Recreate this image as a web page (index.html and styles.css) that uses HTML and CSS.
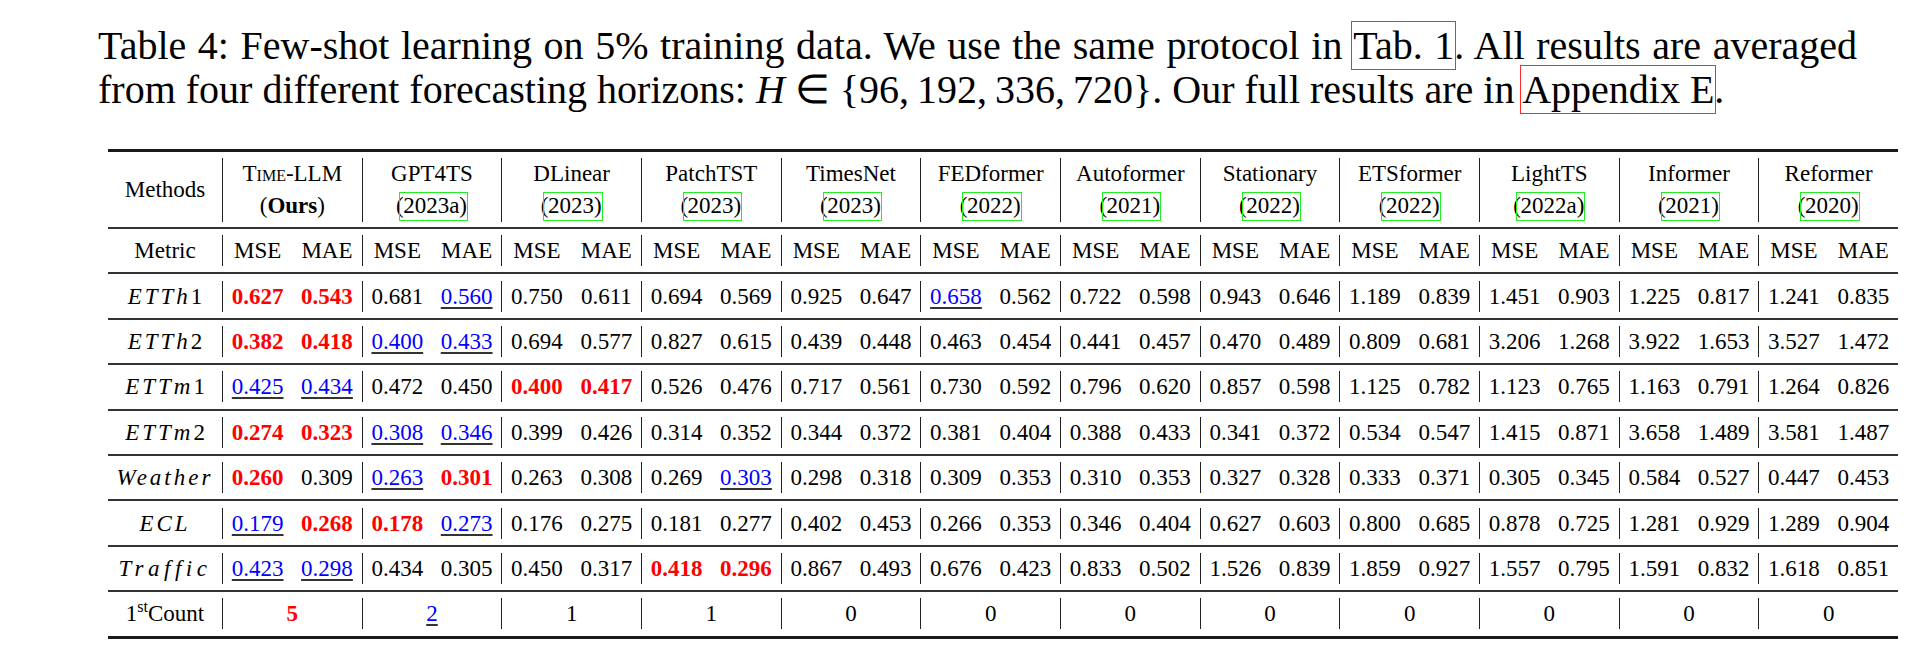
FILE: index.html
```html
<!DOCTYPE html>
<html>
<head>
<meta charset="utf-8">
<link rel="stylesheet" href="styles.css">
</head>
<body>
<div class="page">
  <p class="caption">Table 4: Few-shot learning on 5% training data. We use the same protocol in <span class="ref">Tab. 1</span>. All results are averaged from four different forecasting horizons: <i>H</i> <span class="math">&isin;</span> {96,&thinsp;192,&thinsp;336,&thinsp;720}. Our full results are in <span class="ref">Appendix E</span>.</p>

  <div class="table">
    <div class="row head">
      <div class="c first">Methods</div>
      <div class="g"><span>T<span class="sc">ime</span>-LLM</span><span>(<b>Ours</b>)</span></div>
      <div class="g"><span>GPT4TS</span><span>(<span class="cite">2023a)</span></span></div>
      <div class="g"><span>DLinear</span><span>(<span class="cite">2023)</span></span></div>
      <div class="g"><span>PatchTST</span><span>(<span class="cite">2023)</span></span></div>
      <div class="g"><span>TimesNet</span><span>(<span class="cite">2023)</span></span></div>
      <div class="g"><span>FEDformer</span><span>(<span class="cite">2022)</span></span></div>
      <div class="g"><span>Autoformer</span><span>(<span class="cite">2021)</span></span></div>
      <div class="g"><span>Stationary</span><span>(<span class="cite">2022)</span></span></div>
      <div class="g"><span>ETSformer</span><span>(<span class="cite">2022)</span></span></div>
      <div class="g"><span>LightTS</span><span>(<span class="cite">2022a)</span></span></div>
      <div class="g"><span>Informer</span><span>(<span class="cite">2021)</span></span></div>
      <div class="g"><span>Reformer</span><span>(<span class="cite">2020)</span></span></div>
    </div>

    <div class="row">
      <div class="c first">Metric</div>
      <div class="g pair"><span>MSE</span><span>MAE</span></div>
      <div class="g pair"><span>MSE</span><span>MAE</span></div>
      <div class="g pair"><span>MSE</span><span>MAE</span></div>
      <div class="g pair"><span>MSE</span><span>MAE</span></div>
      <div class="g pair"><span>MSE</span><span>MAE</span></div>
      <div class="g pair"><span>MSE</span><span>MAE</span></div>
      <div class="g pair"><span>MSE</span><span>MAE</span></div>
      <div class="g pair"><span>MSE</span><span>MAE</span></div>
      <div class="g pair"><span>MSE</span><span>MAE</span></div>
      <div class="g pair"><span>MSE</span><span>MAE</span></div>
      <div class="g pair"><span>MSE</span><span>MAE</span></div>
      <div class="g pair"><span>MSE</span><span>MAE</span></div>
    </div>

    <div class="row">
      <div class="c first ds"><span>ETTh<span class="up">1</span></span></div>
      <div class="g pair"><span class="best">0.627</span><span class="best">0.543</span></div>
      <div class="g pair"><span>0.681</span><span class="second">0.560</span></div>
      <div class="g pair"><span>0.750</span><span>0.611</span></div>
      <div class="g pair"><span>0.694</span><span>0.569</span></div>
      <div class="g pair"><span>0.925</span><span>0.647</span></div>
      <div class="g pair"><span class="second">0.658</span><span>0.562</span></div>
      <div class="g pair"><span>0.722</span><span>0.598</span></div>
      <div class="g pair"><span>0.943</span><span>0.646</span></div>
      <div class="g pair"><span>1.189</span><span>0.839</span></div>
      <div class="g pair"><span>1.451</span><span>0.903</span></div>
      <div class="g pair"><span>1.225</span><span>0.817</span></div>
      <div class="g pair"><span>1.241</span><span>0.835</span></div>
    </div>

    <div class="row">
      <div class="c first ds"><span>ETTh<span class="up">2</span></span></div>
      <div class="g pair"><span class="best">0.382</span><span class="best">0.418</span></div>
      <div class="g pair"><span class="second">0.400</span><span class="second">0.433</span></div>
      <div class="g pair"><span>0.694</span><span>0.577</span></div>
      <div class="g pair"><span>0.827</span><span>0.615</span></div>
      <div class="g pair"><span>0.439</span><span>0.448</span></div>
      <div class="g pair"><span>0.463</span><span>0.454</span></div>
      <div class="g pair"><span>0.441</span><span>0.457</span></div>
      <div class="g pair"><span>0.470</span><span>0.489</span></div>
      <div class="g pair"><span>0.809</span><span>0.681</span></div>
      <div class="g pair"><span>3.206</span><span>1.268</span></div>
      <div class="g pair"><span>3.922</span><span>1.653</span></div>
      <div class="g pair"><span>3.527</span><span>1.472</span></div>
    </div>

    <div class="row">
      <div class="c first ds"><span>ETTm<span class="up">1</span></span></div>
      <div class="g pair"><span class="second">0.425</span><span class="second">0.434</span></div>
      <div class="g pair"><span>0.472</span><span>0.450</span></div>
      <div class="g pair"><span class="best">0.400</span><span class="best">0.417</span></div>
      <div class="g pair"><span>0.526</span><span>0.476</span></div>
      <div class="g pair"><span>0.717</span><span>0.561</span></div>
      <div class="g pair"><span>0.730</span><span>0.592</span></div>
      <div class="g pair"><span>0.796</span><span>0.620</span></div>
      <div class="g pair"><span>0.857</span><span>0.598</span></div>
      <div class="g pair"><span>1.125</span><span>0.782</span></div>
      <div class="g pair"><span>1.123</span><span>0.765</span></div>
      <div class="g pair"><span>1.163</span><span>0.791</span></div>
      <div class="g pair"><span>1.264</span><span>0.826</span></div>
    </div>

    <div class="row">
      <div class="c first ds"><span>ETTm<span class="up">2</span></span></div>
      <div class="g pair"><span class="best">0.274</span><span class="best">0.323</span></div>
      <div class="g pair"><span class="second">0.308</span><span class="second">0.346</span></div>
      <div class="g pair"><span>0.399</span><span>0.426</span></div>
      <div class="g pair"><span>0.314</span><span>0.352</span></div>
      <div class="g pair"><span>0.344</span><span>0.372</span></div>
      <div class="g pair"><span>0.381</span><span>0.404</span></div>
      <div class="g pair"><span>0.388</span><span>0.433</span></div>
      <div class="g pair"><span>0.341</span><span>0.372</span></div>
      <div class="g pair"><span>0.534</span><span>0.547</span></div>
      <div class="g pair"><span>1.415</span><span>0.871</span></div>
      <div class="g pair"><span>3.658</span><span>1.489</span></div>
      <div class="g pair"><span>3.581</span><span>1.487</span></div>
    </div>

    <div class="row">
      <div class="c first ds">Weather</div>
      <div class="g pair"><span class="best">0.260</span><span>0.309</span></div>
      <div class="g pair"><span class="second">0.263</span><span class="best">0.301</span></div>
      <div class="g pair"><span>0.263</span><span>0.308</span></div>
      <div class="g pair"><span>0.269</span><span class="second">0.303</span></div>
      <div class="g pair"><span>0.298</span><span>0.318</span></div>
      <div class="g pair"><span>0.309</span><span>0.353</span></div>
      <div class="g pair"><span>0.310</span><span>0.353</span></div>
      <div class="g pair"><span>0.327</span><span>0.328</span></div>
      <div class="g pair"><span>0.333</span><span>0.371</span></div>
      <div class="g pair"><span>0.305</span><span>0.345</span></div>
      <div class="g pair"><span>0.584</span><span>0.527</span></div>
      <div class="g pair"><span>0.447</span><span>0.453</span></div>
    </div>

    <div class="row">
      <div class="c first ds">ECL</div>
      <div class="g pair"><span class="second">0.179</span><span class="best">0.268</span></div>
      <div class="g pair"><span class="best">0.178</span><span class="second">0.273</span></div>
      <div class="g pair"><span>0.176</span><span>0.275</span></div>
      <div class="g pair"><span>0.181</span><span>0.277</span></div>
      <div class="g pair"><span>0.402</span><span>0.453</span></div>
      <div class="g pair"><span>0.266</span><span>0.353</span></div>
      <div class="g pair"><span>0.346</span><span>0.404</span></div>
      <div class="g pair"><span>0.627</span><span>0.603</span></div>
      <div class="g pair"><span>0.800</span><span>0.685</span></div>
      <div class="g pair"><span>0.878</span><span>0.725</span></div>
      <div class="g pair"><span>1.281</span><span>0.929</span></div>
      <div class="g pair"><span>1.289</span><span>0.904</span></div>
    </div>

    <div class="row">
      <div class="c first ds wide">Traffic</div>
      <div class="g pair"><span class="second">0.423</span><span class="second">0.298</span></div>
      <div class="g pair"><span>0.434</span><span>0.305</span></div>
      <div class="g pair"><span>0.450</span><span>0.317</span></div>
      <div class="g pair"><span class="best">0.418</span><span class="best">0.296</span></div>
      <div class="g pair"><span>0.867</span><span>0.493</span></div>
      <div class="g pair"><span>0.676</span><span>0.423</span></div>
      <div class="g pair"><span>0.833</span><span>0.502</span></div>
      <div class="g pair"><span>1.526</span><span>0.839</span></div>
      <div class="g pair"><span>1.859</span><span>0.927</span></div>
      <div class="g pair"><span>1.557</span><span>0.795</span></div>
      <div class="g pair"><span>1.591</span><span>0.832</span></div>
      <div class="g pair"><span>1.618</span><span>0.851</span></div>
    </div>

    <div class="row last">
      <div class="c first"><span>1<sup>st</sup>Count</span></div>
      <div class="g one"><span class="best">5</span></div>
      <div class="g one"><span class="second">2</span></div>
      <div class="g one"><span>1</span></div>
      <div class="g one"><span>1</span></div>
      <div class="g one"><span>0</span></div>
      <div class="g one"><span>0</span></div>
      <div class="g one"><span>0</span></div>
      <div class="g one"><span>0</span></div>
      <div class="g one"><span>0</span></div>
      <div class="g one"><span>0</span></div>
      <div class="g one"><span>0</span></div>
      <div class="g one"><span>0</span></div>
    </div>
  </div>
</div>
</body>
</html>
```

FILE: styles.css
```css
html, body {
  margin: 0;
  padding: 0;
  background: #ffffff;
}

body {
  font-family: "Liberation Serif", "Times New Roman", serif;
  color: #000;
}

.page {
  width: 1912px;
  height: 667px;
  overflow: hidden;
  box-sizing: border-box;
  padding-top: 24px;
}

.caption {
  margin: 0 0 0 98px;
  width: 1759px;
  font-size: 40px;
  line-height: 44px;
  text-align: justify;
  text-align-last: left;
}

.caption i {
  font-style: italic;
}

.ref {
  outline: 1.2px solid #ff2a2a;
  outline-offset: 1px;
}

.table {
  margin: 37px 0 0 108px;
  width: 1790px;
  border-top: 3px solid #1a1a1a;
  font-size: 23px;
}

.row {
  display: grid;
  grid-template-columns: 114px repeat(12, 1fr);
  box-sizing: border-box;
  padding: 6.2px 0;
  border-bottom: 2px solid #333;
  line-height: 31px;
  height: 45.4px;
}

.row.head {
  height: 77px;
  padding: 6px 0;
  line-height: 32px;
}

.row.last {
  border-bottom: 3px solid #1a1a1a;
  height: 46.4px;
}

.c, .g {
  text-align: center;
  white-space: nowrap;
}

.first {
  display: flex;
  align-items: center;
  justify-content: center;
}

.g {
  border-left: 1.5px solid #222;
}

.head .g {
  display: flex;
  flex-direction: column;
  justify-content: center;
  align-items: center;
}

.sc {
  font-variant: small-caps;
}

.cite {
  border: 1.2px solid #22ee22;
  margin-left: -5px;
  padding-left: 3.5px;
  padding-bottom: 2px;
}

.pair {
  display: grid;
  grid-template-columns: 1fr 1fr;
}

.pair span {
  text-align: center;
}

.best {
  color: #ff0000;
  font-weight: bold;
}

.second {
  color: #0000ff;
  text-decoration: underline;
  text-decoration-color: #333;
  text-decoration-thickness: 1.5px;
  text-underline-offset: 3px;
}

.ds {
  font-style: italic;
  letter-spacing: 3px;
}

.ds.wide {
  letter-spacing: 4.5px;
}

.up {
  font-style: normal;
  letter-spacing: 0;
}

sup {
  font-size: 16px;
  line-height: 0;
  vertical-align: 9px;
}
```
